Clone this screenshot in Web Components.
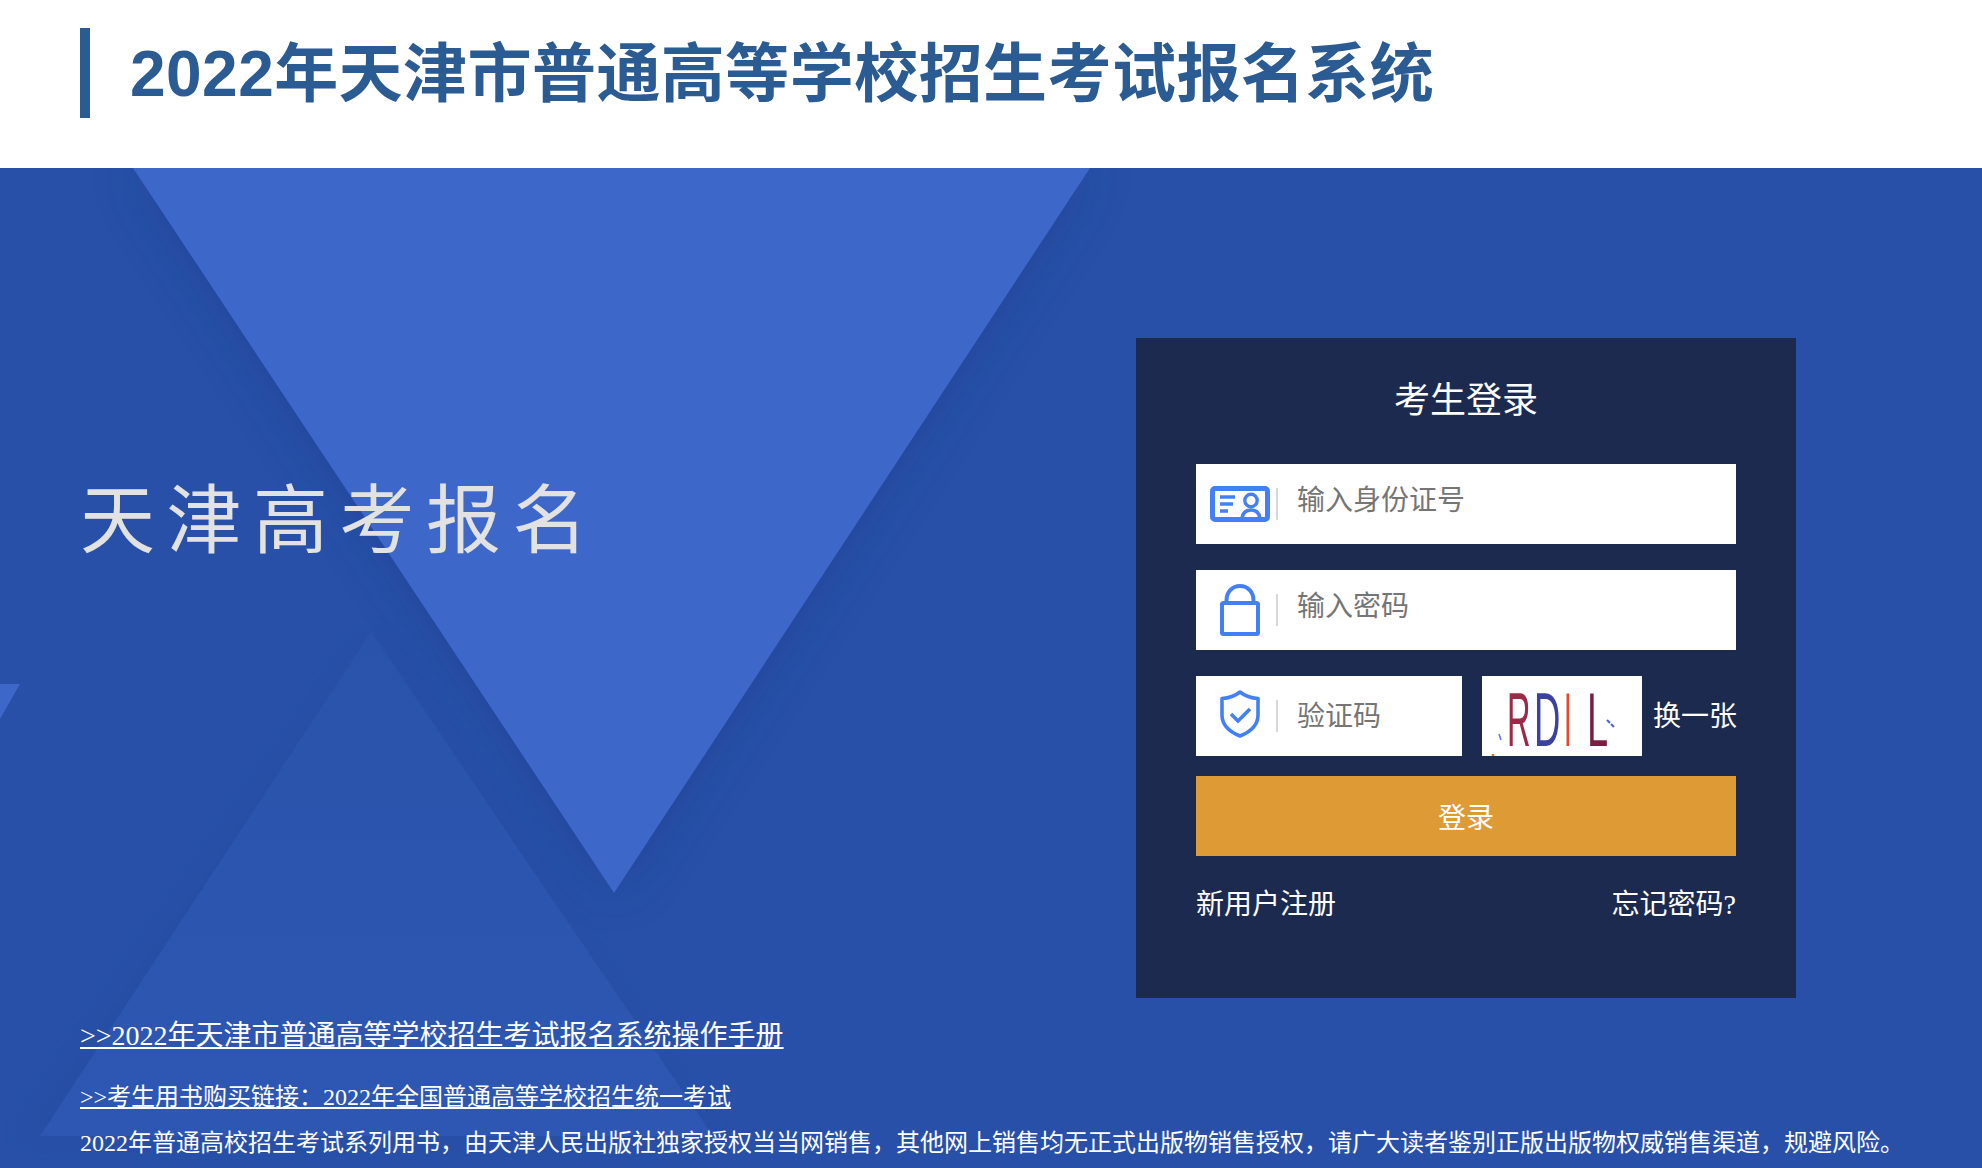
<!DOCTYPE html>
<html lang="zh-CN">
<head>
<meta charset="utf-8">
<title>2022年天津市普通高等学校招生考试报名系统</title>
<style>
html,body{margin:0;padding:0;height:100%;overflow:hidden;background:#fff}
body{font-family:"Liberation Serif","Noto Sans CJK SC",serif}
</style>
</head>
<body>
<exam-page>
  <site-header slot="header">2022年天津市普通高等学校招生考试报名系统</site-header>
  <hero-backdrop slot="backdrop"></hero-backdrop>
  <hero-slogan slot="slogan">天津高考报名</hero-slogan>
  <login-panel slot="panel"></login-panel>
  <notice-links slot="notices"></notice-links>
</exam-page>
<script>
const ICONS={
 id:`<svg width="60" height="36" viewBox="0 0 60 36" fill="none"><rect x="2.500" y="2.500" width="55" height="31" rx="2.500" stroke="#4480f5" stroke-width="5"/><path d="M10 11h15M10 18h13M10 25h8" stroke="#4480f5" stroke-width="3.400"/><circle cx="41" cy="14.500" r="6.200" stroke="#4480f5" stroke-width="3.400"/><path d="M32 32c1-6 4-8 9-8s8 2 9 8" stroke="#4480f5" stroke-width="3.400"/></svg>`,
 lock:`<svg width="40" height="52" viewBox="0 0 40 52" fill="none"><path d="M6.500 20V16.500C6.500 8 12 2 20 2s13.500 6 13.500 14.500V20" stroke="#4480f5" stroke-width="4"/><rect x="2" y="19" width="36" height="31" rx="1.500" stroke="#4480f5" stroke-width="4"/></svg>`,
 shield:`<svg width="40" height="48" viewBox="0 0 40 48" fill="none"><path d="M20 2c5 4 11 6 18 6.500V25c0 10-8 17-18 21C10 42 2 35 2 25V8.500C9 8 15 6 20 2z" stroke="#4480f5" stroke-width="3.600" stroke-linejoin="round"/><path d="M11 24l7 7 12-12" stroke="#4480f5" stroke-width="3.600"/></svg>`
};
function define(name,css,html,init){
  customElements.define(name,class extends HTMLElement{
    constructor(){super();const r=this.attachShadow({mode:"open"});r.innerHTML=`<style>${css}</style>${typeof html==="function"?html(this):html}`;}
    connectedCallback(){if(init)init(this)}
  });
}
define("exam-page",`
  :host{display:flex;flex-direction:column;width:1982px;height:1168px;overflow:hidden}
  main{position:relative;flex:1;background:#2850a8;overflow:hidden;display:flex;flex-direction:column;padding-top:170px;box-sizing:border-box}
  .row{position:relative;display:flex;justify-content:space-between;height:660px;padding:0 186px 0 80px}
  .low{position:relative;padding-left:80px}
`,`<slot name="header"></slot><main><slot name="backdrop"></slot><div class="row"><slot name="slogan"></slot><slot name="panel"></slot></div><div class="low"><slot name="notices"></slot></div></main>`);
define("site-header",`
  :host{display:flex;align-items:flex-start;height:168px;flex:none;padding:28px 0 0 80px;background:#fff;box-sizing:border-box}
  i{display:block;width:10px;height:90px;background:#2b5b93;margin-right:40px}
  h1{margin:1px 0 0;font:700 64px/90px "Liberation Sans","Noto Sans CJK SC",sans-serif;letter-spacing:.45px;color:#2b5b93;white-space:nowrap}
`,`<i></i><h1><slot></slot></h1>`);
define("hero-backdrop",`
  :host{position:absolute;inset:0;display:block}
  svg{display:block}
`,`<svg width="1982" height="1000" viewBox="0 0 1982 1000">
  <defs>
    <filter id="s" x="-20%" y="-20%" width="140%" height="140%"><feGaussianBlur stdDeviation="26"/></filter>
    <filter id="s2" x="-20%" y="-20%" width="140%" height="140%"><feGaussianBlur stdDeviation="14"/></filter>
    <linearGradient id="g" x1="0" y1="0" x2="0" y2="1"><stop offset="0" stop-color="#2a53ab"/><stop offset="1" stop-color="#2d57b2"/></linearGradient>
  </defs>
  <path d="M20 968L371 464L713 968z" fill="#1e3f8e" opacity=".12" filter="url(#s2)"/>
  <path d="M40 968L371 464L713 968z" fill="url(#g)"/>
  <path d="M133 0H1090L614 725z" fill="#163583" opacity=".42" filter="url(#s)"/>
  <path d="M133 0H1090L614 725z" fill="#3d67c9"/>
  <path d="M0 516H20L0 551z" fill="#3d67c9"/>
</svg>`);
define("hero-slogan",`
  :host{display:block;flex:none;padding-top:134px;font-size:75px;line-height:100px;letter-spacing:11.500px;color:#e2e2e2;white-space:nowrap}
`,`<slot></slot>`);
define("login-field",`
  :host{display:flex;align-items:center;height:80px;width:var(--w,540px);background:#fff;box-sizing:border-box;padding-left:14px;flex:none}
  .ic{width:60px;display:flex;justify-content:center;margin-right:6px;flex:none;line-height:0;transform:translateY(var(--iy,0))}
  .dv{width:2px;height:32px;background:#d8d8d8;margin-right:19px;flex:none}
  .tx{font-size:28px;line-height:40px;color:#757575;transform:translateY(var(--ty,-3px));white-space:nowrap}
`,h=>`<span class="ic">${ICONS[h.getAttribute("icon")]}</span><span class="dv"></span><span class="tx"><slot></slot></span>`);
define("captcha-image",`
  :host{position:relative;display:block;width:160px;height:80px;background:#fff;flex:none}
  span{position:absolute;top:11px;left:var(--x);height:66px;font:76px/66px "Liberation Sans",sans-serif;color:var(--c);transform:scaleX(var(--s));transform-origin:0 50%}
  svg{position:absolute;inset:0}
`,`<span style="--x:25px;--c:#9b2a46;--s:.43">R</span><span style="--x:52px;--c:#3a429f;--s:.48">D</span><span style="--x:82px;--c:#e8452c;--s:.36">I</span><span style="--x:105px;--c:#7a1f42;--s:.5">L</span>
<svg width="160" height="80" viewBox="0 0 160 80" fill="none">
  <path d="M17 58l2 6" stroke="#5b78d8" stroke-width="1.500"/>
  <path d="M11 78v2" stroke="#d9782a" stroke-width="2.500"/>
  <path d="M125 44l3 3M129 48l3 3" stroke="#4a66d0" stroke-width="2"/>
</svg>`);
define("login-panel",`
  :host{display:block;width:660px;height:660px;background:#1c2a50;box-sizing:border-box;padding:0 60px;color:#fff;flex:none}
  h2{margin:0;padding-top:38px;height:126px;box-sizing:border-box;text-align:center;font-size:36px;font-weight:400;line-height:50px}
  .f{display:flex;flex-direction:column}
  login-field + login-field{margin-top:26px}
  .cap{display:flex;align-items:center;margin-top:26px}
  .cap captcha-image{margin-left:20px}
  .cap span{margin-left:11px;font-size:28px;line-height:40px;white-space:nowrap;transform:translateY(1px)}
  button{display:block;width:540px;height:80px;margin:20px 0 0;padding:6px 0 0;border:0;background:#dd9a35;color:#fff;font:inherit;font-size:28px;line-height:40px}
  .ln{display:flex;justify-content:space-between;margin-top:29px;font-size:28px;line-height:40px}
  a{color:inherit;text-decoration:none}
`,`<h2>考生登录</h2>
  <div class="f">
    <login-field icon="id">输入身份证号</login-field>
    <login-field icon="lock">输入密码</login-field>
  </div>
  <div class="cap">
    <login-field icon="shield" style="--w:266px;--ty:1px;--iy:-2px">验证码</login-field>
    <captcha-image></captcha-image>
    <span>换一张</span>
  </div>
  <button>登录</button>
  <div class="ln"><a>新用户注册</a><a>忘记密码?</a></div>`);
define("notice-links",`
  :host{display:block;color:#fff;white-space:nowrap}
  a{color:inherit;text-decoration:underline;display:block;width:max-content}
  .a{font-size:28px;line-height:40px;margin-top:18px}
  .b{font-size:24px;line-height:32px;margin-top:25px}
  p{margin:14px 0 0;font-size:24px;line-height:32px}
`,`<a class="a">&gt;&gt;2022年天津市普通高等学校招生考试报名系统操作手册</a>
  <a class="b">&gt;&gt;考生用书购买链接：2022年全国普通高等学校招生统一考试</a>
  <p>2022年普通高校招生考试系列用书，由天津人民出版社独家授权当当网销售，其他网上销售均无正式出版物销售授权，请广大读者鉴别正版出版物权威销售渠道，规避风险。</p>`);
</script>
</body>
</html>
